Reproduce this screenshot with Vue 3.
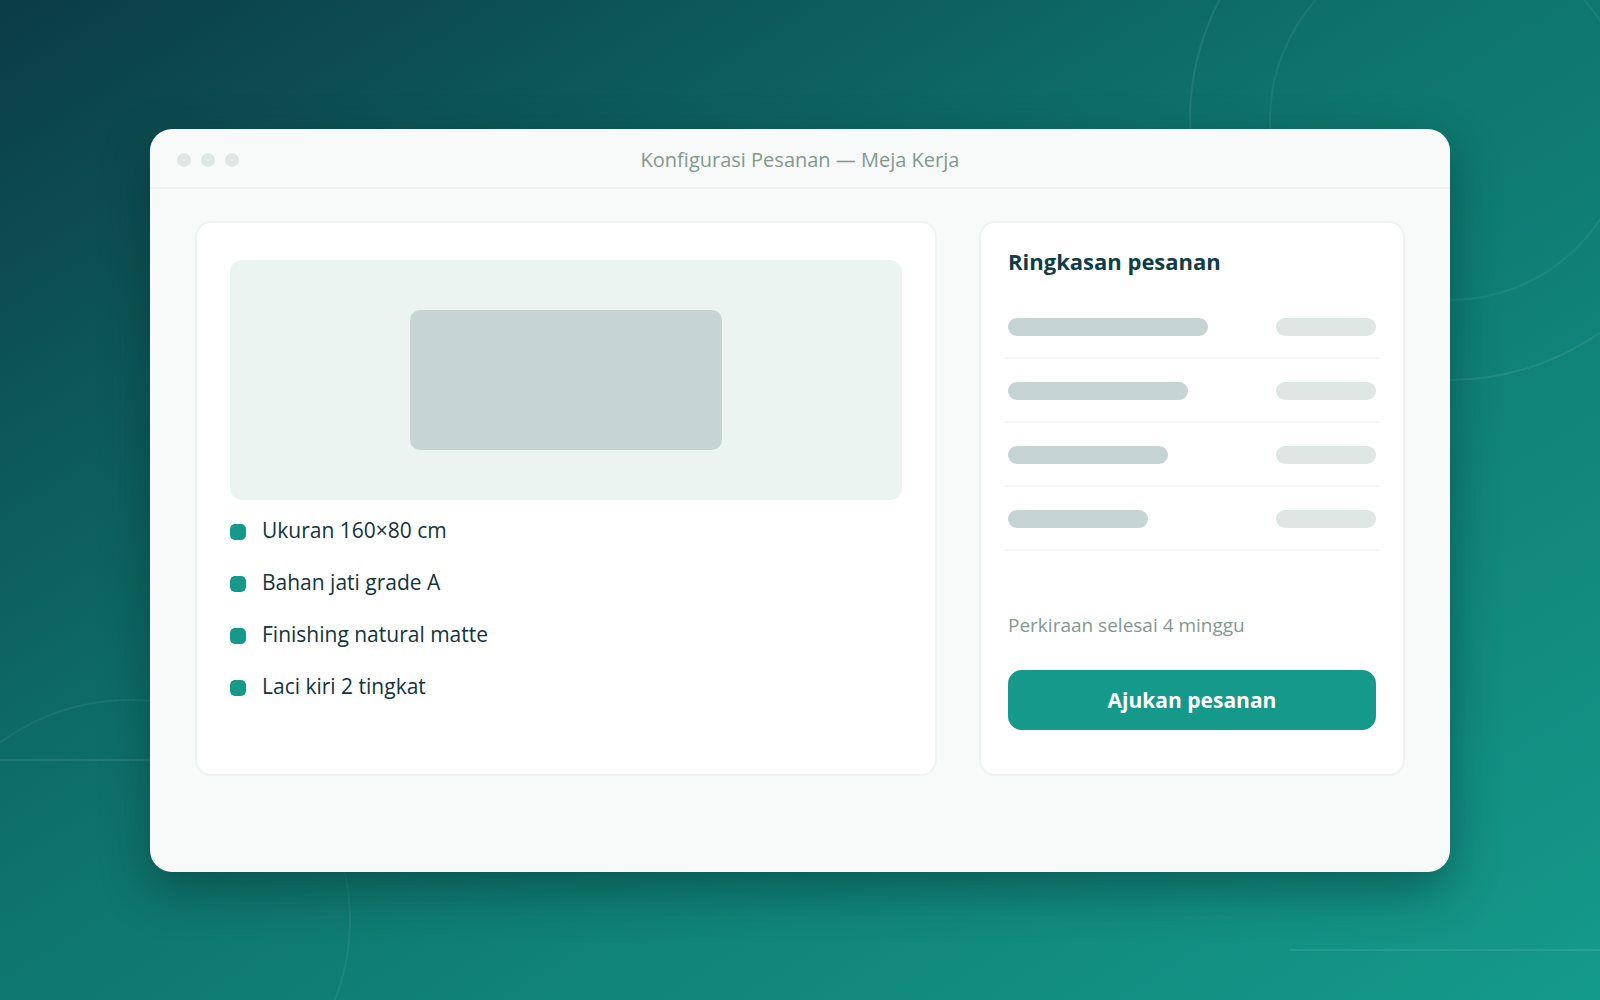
<script setup>
const specs = [
  'Ukuran 160×80 cm',
  'Bahan jati grade A',
  'Finishing natural matte',
  'Laci kiri 2 tingkat',
]
const summaryRows = [200, 180, 160, 140]
</script>

<template>
  <div class="stage">
    <svg class="decor" viewBox="0 0 1600 1000" preserveAspectRatio="xMidYMid slice" aria-hidden="true">
      <circle cx="1450" cy="120" r="260" />
      <circle class="faint" cx="1450" cy="120" r="180" />
      <circle class="faint" cx="130" cy="920" r="220" />
      <path d="M0 760H420M1290 950H1600" />
    </svg>

    <main class="window">
      <header class="titlebar">
        <div class="dots"><i></i><i></i><i></i></div>
        <h1>Konfigurasi Pesanan — Meja Kerja</h1>
      </header>

      <div class="content">
        <section class="card product">
          <div class="preview"><div class="shape"></div></div>
          <ul class="specs">
            <li v-for="spec in specs" :key="spec">{{ spec }}</li>
          </ul>
        </section>

        <section class="card summary">
          <h2>Ringkasan pesanan</h2>
          <div class="rows">
            <div v-for="width in summaryRows" :key="width" class="row">
              <span class="bar" :style="{ width: width + 'px' }"></span>
              <span class="bar value"></span>
            </div>
          </div>
          <p class="estimate">Perkiraan selesai 4 minggu</p>
          <button type="button" class="submit">Ajukan pesanan</button>
        </section>
      </div>
    </main>
  </div>
</template>

<style>
body {
  margin: 0;
}
</style>

<style scoped>
* {
  box-sizing: border-box;
}

.stage {
  position: relative;
  display: flex;
  align-items: center;
  justify-content: center;
  min-height: 100vh;
  padding: 40px 150px;
  overflow: hidden;
  background: linear-gradient(to bottom right, #0b3c46 0%, #0e746b 45%, #149a8b 100%);
  font-family: "Open Sans", "Noto Sans", sans-serif;
  color: #12343b;
}

.decor {
  position: absolute;
  inset: 0;
  width: 100%;
  height: 100%;
  fill: none;
  stroke: rgba(255, 255, 255, 0.08);
  stroke-width: 2;
}

.faint {
  stroke: rgba(255, 255, 255, 0.06);
}

.window {
  position: relative;
  flex: 1;
  max-width: 1440px;
  padding-bottom: 96px;
  border-radius: 22px;
  background: #f7faf9;
  box-shadow: 0 18px 48px rgba(4, 40, 40, 0.45);
}

.titlebar {
  display: grid;
  grid-template-columns: 1fr auto 1fr;
  align-items: center;
  height: 60px;
  padding: 4px 27px 0;
  border-bottom: 2px solid #eef1f0;
}

.dots {
  display: flex;
  gap: 10px;
}

.dots i {
  width: 14px;
  height: 14px;
  border-radius: 50%;
  background: #dfe7e5;
}

h1 {
  margin: 0;
  font-size: 20px;
  font-weight: 400;
  line-height: 28px;
  color: #83998f;
}

.content {
  display: flex;
  gap: 42px;
  padding: 32px 45px 0;
}

.card {
  border: 2px solid #f0f3f2;
  border-radius: 16px;
  background: #fff;
}

.product {
  flex: 1;
  padding: 37px 33px 74px;
}

.preview {
  display: flex;
  align-items: center;
  justify-content: center;
  height: 240px;
  border-radius: 12px;
  background: #ebf4f1;
}

.shape {
  width: 312px;
  height: 140px;
  border-radius: 10px;
  background: #c6d5d4;
}

.specs {
  display: flex;
  flex-direction: column;
  gap: 24px;
  margin: 0;
  padding: 16px 0 0;
  list-style: none;
}

.specs li {
  display: flex;
  align-items: center;
  gap: 16px;
  font-size: 21px;
  line-height: 28px;
}

.specs li::before {
  content: "";
  width: 16px;
  height: 16px;
  margin-top: 4px;
  border-radius: 5px;
  background: #14998a;
}

.summary {
  display: flex;
  flex-direction: column;
  width: 426px;
  padding: 22px 27px 44px;
}

h2 {
  margin: 0;
  font-size: 22px;
  font-weight: 700;
  line-height: 32px;
  color: #0f3d47;
}

.rows {
  margin: 18px -3px 0;
}

.row {
  display: flex;
  align-items: center;
  justify-content: space-between;
  height: 64px;
  padding: 2px 3px 0;
  border-bottom: 2px solid #f4f6f6;
}

.bar {
  height: 18px;
  border-radius: 9px;
  background: #c6d5d4;
}

.value {
  width: 100px;
  background: #dfe7e5;
}

.estimate {
  margin: auto 0 31px;
  font-size: 19px;
  line-height: 28px;
  color: #83998f;
}

.submit {
  height: 60px;
  border: 0;
  border-radius: 14px;
  background: #14998a;
  font: 700 21px/28px "Open Sans", "Noto Sans", sans-serif;
  color: #fff;
  cursor: pointer;
}
</style>
